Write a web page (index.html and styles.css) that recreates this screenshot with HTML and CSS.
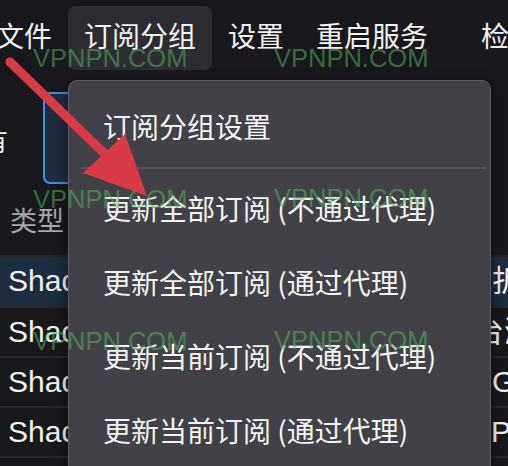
FILE: index.html
```html
<!DOCTYPE html>
<html>
<head>
    <meta charset="utf-8">
    <title>订阅分组</title>
    <link rel="stylesheet" href="styles.css">
</head>
<body>
    <div class="app">
        <div class="menubar">
            <div class="menubar-item">文件</div>
            <div class="menubar-item active">订阅分组</div>
            <div class="menubar-item">设置</div>
            <div class="menubar-item">重启服务</div>
            <div class="menubar-item last">检查更新</div>
        </div>

        <div class="toolbar">
            <span class="toolbar-label">有</span>
            <div class="group-box"></div>
        </div>

        <div class="table-head">
            <span class="col-type">类型</span>
        </div>

        <div class="table">
            <div class="row selected">
                <span class="col-type">Shadowsocks</span>
                <span class="col-remark r-zhe">折扣</span>
            </div>
            <div class="row">
                <span class="col-type">Shadowsocks</span>
                <span class="col-remark r-tw">台湾</span>
            </div>
            <div class="row">
                <span class="col-type">Shadowsocks</span>
                <span class="col-remark r-g">GB</span>
            </div>
            <div class="row">
                <span class="col-type">Shadowsocks</span>
                <span class="col-remark r-jp">JP|4K</span>
            </div>
            <div class="row">
                <span class="col-type">Shadowsocks</span>
                <span class="col-remark">美国</span>
            </div>
        </div>
    </div>

    <div class="dropdown">
        <div class="dropdown-item">订阅分组设置</div>
        <div class="dropdown-sep"></div>
        <div class="dropdown-item">更新全部订阅 (不通过代理)</div>
        <div class="dropdown-item">更新全部订阅 (通过代理)</div>
        <div class="dropdown-item">更新当前订阅 (不通过代理)</div>
        <div class="dropdown-item">更新当前订阅 (通过代理)</div>
    </div>

    <div class="watermark wm1">VPNPN.COM</div>
    <div class="watermark wm2">VPNPN.COM</div>
    <div class="watermark wm3">VPNPN.COM</div>
    <div class="watermark wm4">VPNPN.COM</div>
    <div class="watermark wm5">VPNPN.COM</div>
    <div class="watermark wm6">VPNPN.COM</div>

    <!-- red pointer arrow drawn over the screenshot -->
    <svg class="arrow" width="508" height="466" viewBox="0 0 508 466">
        <line x1="10" y1="62" x2="108" y2="157" stroke="#d83a48" stroke-width="9" stroke-linecap="round"/>
        <polygon points="147,196 83,173 125,134" fill="#d83a48"/>
    </svg>
</body>
</html>
```

FILE: styles.css
```css
html, body {
    margin: 0;
    padding: 0;
}

body {
    width: 508px;
    height: 466px;
    overflow: hidden;
    position: relative;
    background-color: #19181d;
    color: #f2f2f2;
    font-family: "Liberation Sans", "Noto Sans CJK SC", sans-serif;
}

.app {
    width: 508px;
}

.menubar {
    display: flex;
    margin: 6px 0 0 -20px;
    height: 64px;
}

.menubar-item {
    padding: 0 16px;
    font-size: 28px;
    line-height: 64px;
    border-radius: 8px;
    white-space: nowrap;
}

.menubar-item.active {
    background-color: #2d2c32;
}

.menubar-item.last {
    margin-left: 21px;
}

.toolbar {
    display: flex;
    align-items: center;
    margin: 22px 0 0 -18px;
    height: 92px;
}

.toolbar-label {
    font-size: 26px;
    width: 26px;
    margin-right: 35px;
    margin-top: 2px;
}

.group-box {
    width: 80px;
    height: 88px;
    border: 2px solid #3c8ee4;
    border-radius: 7px;
    background-color: #1f2c3e;
}

.table-head {
    height: 73px;
    padding-left: 10px;
    box-sizing: border-box;
    border-bottom: 2px solid #242328;
    color: #a9a9ad;
    font-size: 27px;
    line-height: 56px;
    padding-top: 10px;
}

.row {
    display: flex;
    height: 50px;
    line-height: 48px;
    padding-left: 8px;
    border-bottom: 2px solid #29282d;
    box-sizing: border-box;
    font-size: 30px;
    white-space: nowrap;
}

.row.selected {
    background-color: #1e2c40;
    height: 51px;
}

.row .col-type {
    width: 466px;
    flex-shrink: 0;
}

.r-zhe { margin-left: 18px; }
.r-tw { margin-left: 0; }
.r-g { margin-left: 18px; }
.r-jp { margin-left: 2px; }

.dropdown {
    position: absolute;
    left: 68px;
    top: 80px;
    width: 423px;
    height: 420px;
    padding-top: 9px;
    box-sizing: border-box;
    background-color: #414147;
    border: 1px solid #5d5d63;
    border-radius: 9px;
    box-shadow: 0 4px 14px rgba(0, 0, 0, 0.5);
}

.dropdown-item {
    height: 74px;
    line-height: 72px;
    padding-left: 34px;
    font-size: 28px;
    font-family: "Noto Sans CJK SC", sans-serif;
    color: #f4f4f4;
    white-space: nowrap;
}

.dropdown-sep {
    height: 2px;
    margin: 3px 4px 3px 12px;
    background-color: #54545a;
}

.watermark {
    position: absolute;
    font-family: "Liberation Sans", sans-serif;
    font-size: 25.5px;
    line-height: 1;
    color: rgba(92, 178, 96, 0.55);
    white-space: nowrap;
}

.wm1 { left: 33px; top: 46px; }
.wm2 { left: 274px; top: 46px; }
.wm3 { left: 33px; top: 187px; }
.wm4 { left: 274px; top: 186px; }
.wm5 { left: 33px; top: 329px; }
.wm6 { left: 274px; top: 328px; }

.arrow {
    position: absolute;
    left: 0;
    top: 0;
}
```
